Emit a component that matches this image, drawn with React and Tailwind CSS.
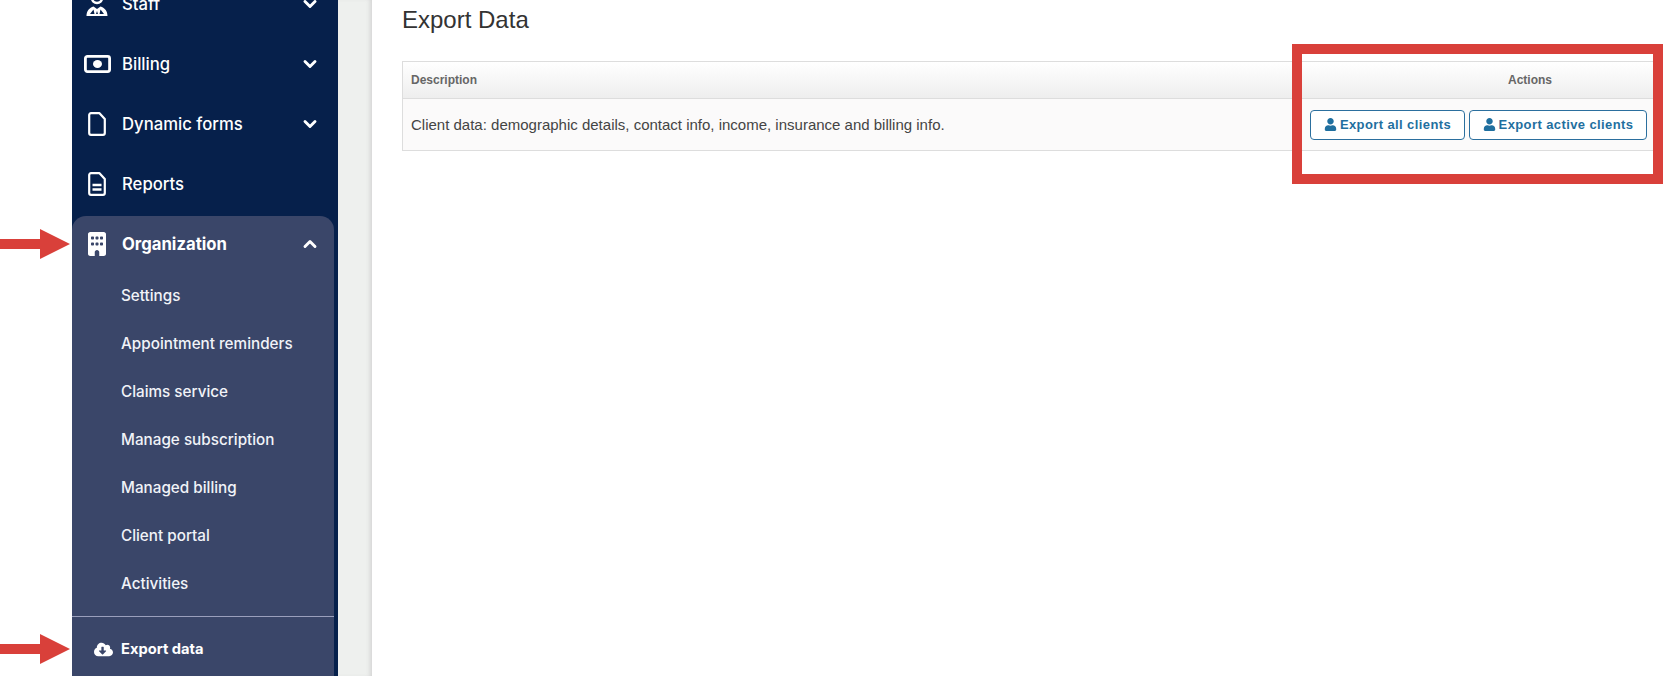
import { ChevronDown, ChevronUp } from 'lucide-react';
import { FaCloudDownloadAlt, FaUser } from 'react-icons/fa';
import { FaBuilding } from 'react-icons/fa6';

const subItems = [
  'Settings',
  'Appointment reminders',
  'Claims service',
  'Manage subscription',
  'Managed billing',
  'Client portal',
  'Activities',
];

function StaffIcon() {
  return (
    <svg width="22" height="24" viewBox="0 0 22 24" fill="none" aria-hidden="true">
      <circle cx="11" cy="6" r="5" stroke="white" strokeWidth="2.500" />
      <path d="M0.500 24c0-5 3-8.500 7-9.500l3.500 2.500 3.500-2.500c4 1 7 4.500 7 9.500z" fill="white" />
      <path d="M4 22l3.500-4.500 1 4.500zM18 22l-3.500-4.500-1 4.500zM11 19l-1 3h2z" fill="#06204b" />
    </svg>
  );
}

function MoneyIcon() {
  return (
    <svg width="27" height="18" viewBox="0 0 27 18" fill="none" aria-hidden="true">
      <rect x="1.400" y="1.400" width="24.200" height="15.200" rx="2" stroke="white" strokeWidth="2.800" />
      <path d="M5.500 3.500h16c0 1 .8 2 2 2v7c-1.200 0-2 1-2 2h-16c0-1-.8-2-2-2v-7c1.200 0 2-1 2-2z" fill="#06204b" />
      <ellipse cx="13.500" cy="9" rx="4.500" ry="4" fill="white" />
    </svg>
  );
}

function FileIcon({ lines }) {
  return (
    <svg width="18" height="24" viewBox="0 0 18 24" fill="none" aria-hidden="true">
      <path
        d="M3 1.200h8.500l5.300 5.800V21a1.800 1.800 0 0 1-1.800 1.800H3A1.800 1.800 0 0 1 1.200 21V3A1.800 1.800 0 0 1 3 1.200z"
        stroke="white"
        strokeWidth="2.200"
        strokeLinejoin="round"
      />
      {lines && <path d="M4.500 13h9M4.500 17.500h9" stroke="white" strokeWidth="2.400" />}
    </svg>
  );
}

function NavRow({ icon, label, open, arrow, active }) {
  return (
    <div className={active ? 'flex h-[56px] items-center' : 'flex h-[60px] items-center'}>
      <span className="flex w-[50px] shrink-0 justify-center">{icon}</span>
      <span className={active ? 'pt-[2px] text-[16.700px] font-bold text-white' : 'pt-[2px] text-[16.700px] font-medium text-white'}>
        {label}
      </span>
      {arrow && (
        <span className={active ? 'ml-auto mr-[14px] text-white' : 'ml-auto mr-[18px] text-white'}>
          {open ? <ChevronUp size={20} strokeWidth={3.500} /> : <ChevronDown size={20} strokeWidth={3.500} />}
        </span>
      )}
    </div>
  );
}

function Sidebar() {
  return (
    <aside className="w-[266px] shrink-0 bg-[#06204b] font-['Inter',sans-serif]">
      <div className="mt-[-26px]">
        <NavRow icon={<StaffIcon />} label="Staff" arrow />
        <NavRow icon={<MoneyIcon />} label="Billing" arrow />
        <NavRow icon={<FileIcon />} label="Dynamic forms" arrow />
        <NavRow icon={<FileIcon lines />} label="Reports" />
      </div>
      <div className="mt-[2px] mr-[4px] rounded-t-[14px] bg-[#3a4669]">
        <NavRow icon={<FaBuilding size={24} color="white" />} label="Organization" arrow open active />
        <div className="pb-[8px]">
          {subItems.map((item) => (
            <div key={item} className="flex h-[48px] items-center pl-[49px] pt-[1px] text-[15.250px] font-medium text-[#f1f3f8]">
              {item}
            </div>
          ))}
        </div>
        <div className="flex h-[66px] items-center border-t border-[#9a9fbc] pl-[22px]">
          <FaCloudDownloadAlt size={19} color="white" />
          <span className="ml-[8px] text-[14.700px] font-bold text-white">Export data</span>
        </div>
      </div>
    </aside>
  );
}

function ExportButton({ label, className }) {
  return (
    <button className={`flex h-[30px] items-center justify-center gap-[3px] rounded-[4px] border border-[#2b6f9e] bg-white text-[13px] font-bold tracking-[0.4px] text-[#1f6f9f] ${className}`}>
      <FaUser size={13} />
      {label}
    </button>
  );
}

export default function App() {
  return (
    <div className="relative flex h-[676px] w-[1672px] overflow-hidden bg-white font-['Liberation_Sans',sans-serif]">
      <div className="w-[72px] shrink-0" />
      <Sidebar />
      <div className="w-[34px] shrink-0 bg-[#eef0ee] shadow-[inset_-4px_0_4px_-2px_#d4d4d4]" />
      <main className="flex-1 pl-[30px] pr-[17px]">
        <h1 className="mt-[6px] h-[28px] text-[24px] leading-[28px] text-[#333]">Export Data</h1>
        <div className="mt-[27px] border-y border-l border-[#dddddd]">
          <div className="flex h-[37px] items-center justify-between border-b border-[#dddddd] bg-gradient-to-b from-white to-[#eeeeee] pl-[8px] pr-[103px] text-[12px] font-bold text-[#666]">
            <span>Description</span>
            <span>Actions</span>
          </div>
          <div className="flex h-[51px] items-center justify-between bg-[#fbfafa] pl-[8px] pr-[8px] text-[15px] text-[#444]">
            <span className="pt-[1px]">Client data: demographic details, contact info, income, insurance and billing info.</span>
            <div className="flex gap-[4px]">
              <ExportButton label="Export all clients" className="w-[155px]" />
              <ExportButton label="Export active clients" className="w-[178px]" />
            </div>
          </div>
        </div>
      </main>

      {/* annotations on top of the screenshot */}
      <svg className="absolute left-0 top-[229px]" width="71" height="31" viewBox="0 0 71 31" aria-hidden="true">
        <path d="M0 10h40V0l30 15-30 15V20H0z" fill="#d9403a" />
      </svg>
      <svg className="absolute left-0 top-[634px]" width="71" height="31" viewBox="0 0 71 31" aria-hidden="true">
        <path d="M0 10h40V0l30 15-30 15V20H0z" fill="#d9403a" />
      </svg>
      <div className="absolute left-[1292px] top-[44px] h-[140px] w-[371px] border-[10px] border-[#d9403a]" />
    </div>
  );
}
